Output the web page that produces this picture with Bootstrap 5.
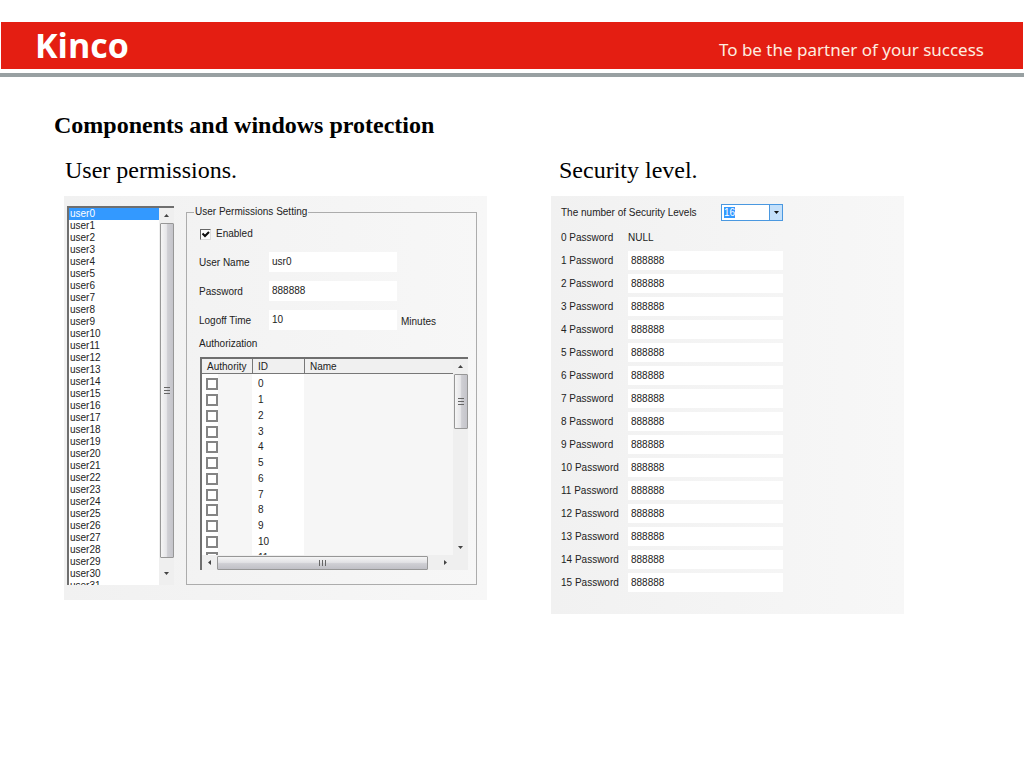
<!DOCTYPE html>
<html lang="en">
<head>
<meta charset="utf-8">
<meta name="viewport" content="width=device-width, initial-scale=1">
<title>Components and windows protection</title>
<link href="https://cdn.jsdelivr.net/npm/bootstrap@5.3.0/dist/css/bootstrap.min.css" rel="stylesheet">
<style>
  body { background: #fff; color: #000; font-family: "Liberation Serif", serif; }
  .brand-bar { background: #e41e12; min-height: 47px; padding: 0 39px 0 34px; margin: 22px 1px 4px; }
  .brand-name { font: bold 34px/46px "Open Sans", sans-serif; color: #fff; padding-bottom: 1px; }
  .brand-motto { font: 17px/24px "Noto Sans", sans-serif; color: #fdeee0; padding-top: 8px; }
  .brand-rule { height: 4px; background: #98a0a2; }
  .slide { padding: 32px 120px 32px 64px; }
  .slide-title { font-size: 24px; line-height: 32px; font-weight: bold; margin: 0 0 13px -10px; }
  .panels { display: grid; grid-template-columns: 423fr 353fr; gap: 64px; align-items: start; }
  .panel-title { font-size: 24px; line-height: 32px; font-weight: normal; margin: 0 0 10px; padding-left: 1px; }
  .dialog-box { background: linear-gradient(90deg, #f1f1f1, #f7f7f7); font: 10px/14px "Liberation Sans", sans-serif; color: #222; }
  .dialog-box input[type=text] { border: 0; background: #fff; color: #222; font: inherit; min-width: 0; border-radius: 0; }
  .user-dialog { padding: 10px 10px 15px 3px; gap: 12px; }

  .sunken { border: solid #6f6f6f; border-width: 2px 0 0 2px; background: #fff; }
  .user-box { width: 107px; height: 379px; }
  .user-box select { border: 0; padding: 0; margin: 0; outline: 0; height: 100%; min-width: 0; overflow: hidden; scrollbar-width: none; font: inherit; color: #222; background: #fff; border-radius: 0; }
  .user-box option { font: 10px/12px "Liberation Sans", sans-serif; height: 12px; min-height: 12px; padding: 0 1px; }
  .user-box option:checked { background: #3399ff linear-gradient(#3399ff, #3399ff); color: #fff !important; }

  .sb { background: #efefef; display: flex; align-items: center; }
  .sb-v { width: 15px; flex-direction: column; }
  .sb-h { height: 15px; }
  .sb button { border: 0; padding: 0; background: none; flex: none; width: 15px; height: 15px; display: flex; align-items: center; justify-content: center; }
  .sb-thumb { border: 1px solid #979797; border-radius: 1px; display: flex; align-items: center; justify-content: center; }
  .sb-v .sb-thumb { width: 14px; background: linear-gradient(90deg, #f5f5f5, #e6e6e9 45%, #cfcfd4 55%, #c4c4ca); }
  .sb-h .sb-thumb { height: 14px; background: linear-gradient(#f5f5f5, #e2e2e5 45%, #cfcfd4 55%, #c0c0c6); }
  .sb svg { display: block; }

  .perm-set { border: 1px solid #acacac; padding: 0 8px 13px 12px; height: 379px; min-width: 0; }
  .perm-set legend { float: none; width: auto; margin: 0 0 0 -5px; padding: 0 1px; font: inherit; line-height: 12px; }
  .enable-row { gap: 5px; height: 16px; margin: 8px 0 10px; }
  .tick { appearance: none; width: 11px; height: 11px; margin: 0 0 0 1px; border: solid; border-width: 1px; border-color: #666 #ddd #ddd #666; background: #fff; display: block; }
  .tick-mark { position: absolute; left: 2px; top: 1px; pointer-events: none; }
  .fields { display: grid; grid-template-columns: 70px minmax(0, 128px) auto; row-gap: 9px; }
  .fields label { padding-top: 4px; }
  .fields span { padding: 5px 0 0 4px; }
  .fields input { height: 20px; padding: 0 3px 2px; }
  .auth-caption { margin: 7px 0 6px; }

  .auth-box { height: 213px; display: grid; grid-template-columns: minmax(0, 1fr) 15px; grid-template-rows: minmax(0, 1fr) 15px; margin-left: 1px; background: #efefef; }
  .auth-view { overflow: hidden; }
  .auth-table { width: 100%; table-layout: fixed; border-collapse: separate; border-spacing: 0; background: #f6f6f6; }
  .auth-table th { height: 15px; padding: 0 5px; line-height: 13px; font-weight: normal; background: #f0f0f0; border-bottom: 1px solid #777; border-left: 1px solid #777; }
  .auth-table th:first-child { border-left: 0; }
  .auth-table td { height: 16px; padding: 0 6px; line-height: 14px; }
  .auth-table tr:nth-child(4n) td { height: 15px; }
  .auth-table td:first-child { background: linear-gradient(90deg, #fff 16px, #f6f6f6 16px); padding: 0 4px; }
  .auth-table td:nth-child(2) { background: #fff; }
  .auth-table input { appearance: none; display: block; width: 12px; height: 12px; margin: 0; border: 2px solid #848484; background: #fff; }
  .auth-table .top-gap td { height: 2px; padding: 0; line-height: 2px; }

  .level-box { padding: 8px 10px 18px; }
  .level-row { display: grid; grid-template-columns: 67px minmax(0, 155px); height: 19px; margin-bottom: 4px; align-items: center; }
  .level-row input { height: 19px; padding: 0 3px; }
  .count-row { height: 17px; margin-bottom: 7px; }
  .count-label { width: 160px; }
  .count-box { width: 62px; }
  .count-box select { appearance: none; display: block; width: 100%; height: 17px; border: 1px solid #4a98e0; border-radius: 0; padding: 0 2px; font: 10px/14px "Liberation Sans", sans-serif; color: #fff; background: linear-gradient(#3399ff, #3399ff) 2px 2px / 11px 11px no-repeat, linear-gradient(90deg, #4a98e0 1px, #c4e0fa 1px) right / 13px 100% no-repeat, #fff; }
  .count-box option { color: #222; }
  .count-box svg { position: absolute; right: 4px; top: 7px; pointer-events: none; }
</style>
</head>
<body>
<header>
  <div class="brand-bar d-flex justify-content-between align-items-center">
    <div class="brand-name">Kinco</div>
    <div class="brand-motto">To be the partner of your success</div>
  </div>
  <div class="brand-rule"></div>
</header>

<main class="slide">
  <h1 class="slide-title">Components and windows protection</h1>
  <div class="panels">
    <section>
      <h2 class="panel-title">User permissions.</h2>
      <div class="dialog-box user-dialog d-flex">
        <div class="sunken user-box d-flex flex-shrink-0">
          <select id="users" class="flex-fill" size="32" aria-label="Users"></select>
          <div class="sb sb-v">
            <button type="button" aria-label="Scroll up"><svg width="5" height="3"><path d="M0 3 2.500 0 5 3z" fill="#444"/></svg></button>
            <div class="sb-thumb flex-fill"><svg width="6" height="7"><path d="M0 .5h6M0 3.500h6M0 6.500h6" stroke="#666"/></svg></div>
            <button type="button" class="mt-2 mb-1" aria-label="Scroll down"><svg width="5" height="3"><path d="M0 0h5L2.500 3z" fill="#444"/></svg></button>
          </div>
        </div>
        <fieldset class="perm-set flex-fill">
          <legend>User Permissions Setting</legend>
          <div class="enable-row d-flex align-items-center">
            <div class="position-relative">
              <input class="tick" type="checkbox" id="enabled" checked>
              <svg class="tick-mark" width="9" height="9"><path d="M1.500 3.500 4 6 8 2" fill="none" stroke="#111" stroke-width="2"/></svg>
            </div>
            <label for="enabled">Enabled</label>
          </div>
          <div class="fields">
            <label for="uname">User Name</label><input type="text" id="uname" value="usr0"><span></span>
            <label for="upass">Password</label><input type="text" id="upass" value="888888"><span></span>
            <label for="utime">Logoff Time</label><input type="text" id="utime" value="10"><span>Minutes</span>
          </div>
          <div class="auth-caption">Authorization</div>
          <div class="sunken auth-box">
            <div class="auth-view">
              <table class="auth-table">
                <colgroup><col style="width:50px"><col style="width:52px"><col></colgroup>
                <thead><tr><th>Authority</th><th>ID</th><th>Name</th></tr></thead>
                <tbody><tr class="top-gap"><td></td><td></td><td></td></tr></tbody>
                <tbody id="auth-rows"></tbody>
              </table>
            </div>
            <div class="sb sb-v">
              <button type="button" aria-label="Scroll up"><svg width="5" height="3"><path d="M0 3 2.500 0 5 3z" fill="#444"/></svg></button>
              <div class="sb-thumb" style="height:28%"><svg width="6" height="7"><path d="M0 .5h6M0 3.500h6M0 6.500h6" stroke="#666"/></svg></div>
              <button type="button" class="mt-auto" aria-label="Scroll down"><svg width="5" height="3"><path d="M0 0h5L2.500 3z" fill="#444"/></svg></button>
            </div>
            <div class="sb sb-h">
              <button type="button" aria-label="Scroll left"><svg width="3" height="5"><path d="M3 0v5L0 2.500z" fill="#444"/></svg></button>
              <div class="sb-thumb" style="width:84%"><svg width="7" height="6"><path d="M.5 0v6M3.500 0v6M6.500 0v6" stroke="#666"/></svg></div>
              <button type="button" class="ms-auto" aria-label="Scroll right"><svg width="3" height="5"><path d="M0 0v5L3 2.500z" fill="#444"/></svg></button>
            </div>
          </div>
        </fieldset>
      </div>
    </section>

    <section>
      <h2 class="panel-title ps-2">Security level.</h2>
      <div class="dialog-box level-box">
        <div class="count-row d-flex align-items-center">
          <label class="count-label" for="levels">The number of Security Levels</label>
          <div class="count-box position-relative">
            <select id="levels"><option>16</option></select>
            <svg width="5" height="3"><path d="M0 0h5L2.500 3z" fill="#111"/></svg>
          </div>
        </div>
        <div class="level-row"><span>0 Password</span><span>NULL</span></div>
        <div id="level-rows"></div>
      </div>
    </section>
  </div>
</main>

<script src="https://cdn.jsdelivr.net/npm/bootstrap@5.3.0/dist/js/bootstrap.bundle.min.js"></script>
<script>
  const repeat = (count, row) => Array.from({ length: count }, (_, i) => row(i)).join('');
  document.getElementById('users').innerHTML =
    repeat(32, i => `<option${i ? '' : ' selected'}>user${i}</option>`);
  document.getElementById('auth-rows').innerHTML =
    repeat(12, i => `<tr><td><input type="checkbox" aria-label="Authority ${i}"></td><td>${i}</td><td></td></tr>`);
  document.getElementById('level-rows').innerHTML =
    repeat(15, i => `<div class="level-row"><label for="level${i + 1}">${i + 1} Password</label><input type="text" id="level${i + 1}" value="888888"></div>`);
</script>
</body>
</html>
